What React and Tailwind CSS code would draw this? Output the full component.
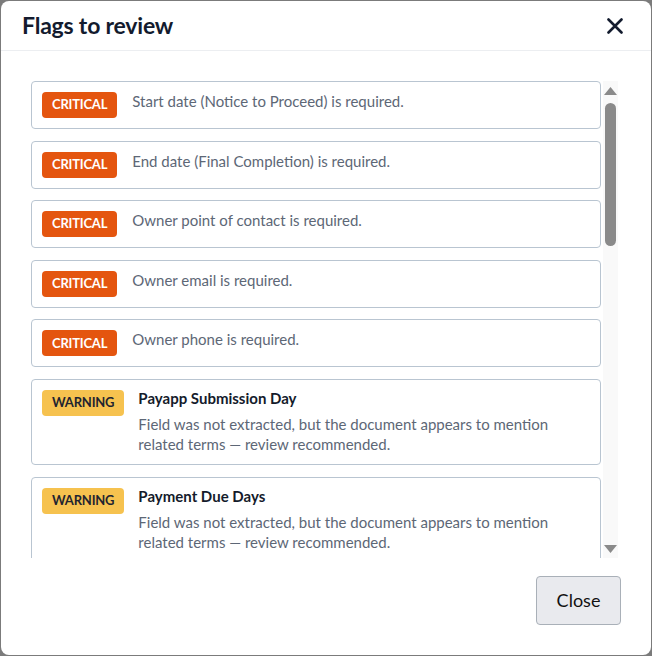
import React from "react";

const flags = [
  { level: "critical", text: "Start date (Notice to Proceed) is required." },
  { level: "critical", text: "End date (Final Completion) is required." },
  { level: "critical", text: "Owner point of contact is required." },
  { level: "critical", text: "Owner email is required." },
  { level: "critical", text: "Owner phone is required." },
  { level: "warning", title: "Payapp Submission Day" },
  { level: "warning", title: "Payment Due Days" },
  { level: "warning", title: "Retainage Percentage" },
  { level: "warning", title: "Retainage Release" },
  { level: "warning", title: "Liquidated Damages" },
];

const WARNING_TEXT =
  "Field was not extracted, but the document appears to mention related terms — review recommended.";

function Badge({ level }) {
  if (level === "critical") {
    return (
      <span className="shrink-0 h-[26px] px-[10px] flex items-center rounded-[4px] bg-[#e4550f] text-white text-[13px] font-bold tracking-[-0.2px]">
        CRITICAL
      </span>
    );
  }
  return (
    <span className="shrink-0 h-[26px] px-[10px] flex items-center rounded-[4px] bg-[#f6c24f] text-[#1f2430] text-[13px] font-bold tracking-[-0.2px]">
      WARNING
    </span>
  );
}

function FlagCard({ flag }) {
  return (
    <div className="shrink-0 flex items-start gap-[15px] border border-[#b9c5d1] rounded-[4px] px-[10px] py-[10px] bg-white">
      <Badge level={flag.level} />
      {flag.level === "critical" ? (
        <p className="text-[15px] leading-5 text-[#5d6776] -mt-[1px]">{flag.text}</p>
      ) : (
        <div className="flex flex-col -ml-[1px]">
          <p className="text-[15px] leading-5 font-bold text-[#141b2b] -mt-[2px] mb-[6px]">
            {flag.title}
          </p>
          <p className="text-[15px] leading-5 text-[#5d6776] pr-[40px]">
            {WARNING_TEXT}
          </p>
        </div>
      )}
    </div>
  );
}

function ScrollBar() {
  return (
    <div className="w-[15px] shrink-0 flex flex-col items-center bg-[#f9f9f9]">
      <svg width="13" height="8" viewBox="0 0 13 8" className="mt-[6px]">
        <path d="M6.5 0 L13 8 L0 8 Z" fill="#8a8a8a" />
      </svg>
      <div className="flex-1 w-full flex justify-center">
        <div className="mt-[8px] w-[11px] h-[143px] rounded-full bg-[#8a8a8a]" />
      </div>
      <svg width="13" height="8" viewBox="0 0 13 8" className="mb-[5px]">
        <path d="M0 0 L13 0 L6.5 8 Z" fill="#8a8a8a" />
      </svg>
    </div>
  );
}

export default function App() {
  return (
    <div
      className="w-[652px] h-[656px] bg-[#7b7b7b] pl-[1px] pt-[1px]"
      style={{ fontFamily: "Lato, 'Noto Sans', sans-serif" }}
    >
      <div className="w-[650px] h-[654px] bg-white rounded-[8px] flex flex-col overflow-hidden">
        {/* Header */}
        <div className="h-[50px] shrink-0 flex items-center justify-between pl-[21px] pr-[28px] border-b border-[#eceef1]">
          <h2 className="text-[23px] font-bold text-[#131b2e] tracking-[-0.2px]">
            Flags to review
          </h2>
          <button className="text-[#131b2e]">
            <svg width="16" height="16" viewBox="0 0 16 16">
              <path
                d="M1.5 1.5 L14.5 14.5 M14.5 1.5 L1.5 14.5"
                stroke="currentColor"
                strokeWidth="2.6"
                strokeLinecap="round"
              />
            </svg>
          </button>
        </div>

        {/* Body: list with scrollbar */}
        <div className="pt-[30px] pl-[30px]">
          <div className="h-[477px] flex gap-[2px]">
            <div className="w-[570px] flex flex-col gap-[11.6px] overflow-hidden">
              {flags.map((f, i) => (
                <FlagCard key={i} flag={f} />
              ))}
            </div>
            <ScrollBar />
          </div>
        </div>

        {/* Footer */}
        <div className="flex justify-end pt-[18px] pr-[30px]">
          <button className="w-[85px] h-[49px] rounded-[4px] border border-[#a9b0b8] bg-[#e9eaee] text-[18px] text-[#111]">
            Close
          </button>
        </div>
      </div>
    </div>
  );
}
